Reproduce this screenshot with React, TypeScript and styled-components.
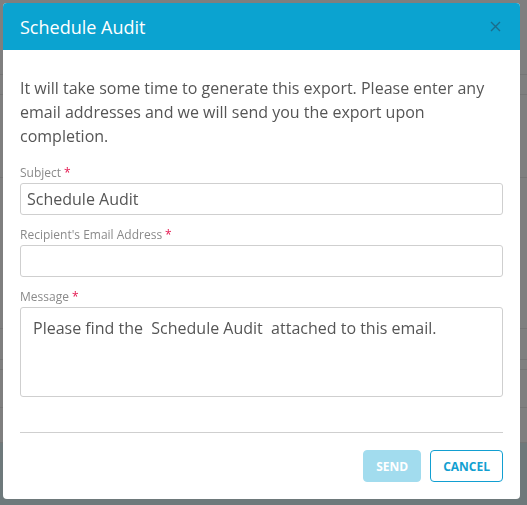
import React from "react";
import styled, { createGlobalStyle } from "styled-components";

const GlobalStyle = createGlobalStyle`
  html, body {
    margin: 0;
    padding: 0;
    height: 100%;
  }
  body {
    font-family: "Open Sans", "Liberation Sans", Arial, sans-serif;
    background: #ffffff;
    overflow: hidden;
  }
`;

// rows of the page that sits behind the dialog
const pageRows = [75, 20, 83, 151, 31, 10, 38, 35];

const Page = styled.div`
  display: flex;
  flex-direction: column;
  height: 505px;
`;

const PageRow = styled.div<{ $h: number }>`
  height: ${(p) => p.$h}px;
  border-bottom: 1px solid #ebebeb;
  box-sizing: border-box;
`;

const PageFooter = styled.div`
  flex: 1;
  background: #dcf2f6;
`;

const Overlay = styled.div`
  position: fixed;
  inset: 0;
  background: rgba(0, 0, 0, 0.5);
  padding: 3px 7px 6px 3px;
  box-sizing: border-box;
  display: flex;
`;

const Dialog = styled.div`
  flex: 1;
  background: #fff;
  border-radius: 4px;
  overflow: hidden;
  display: flex;
  flex-direction: column;
`;

const Header = styled.div`
  height: 47px;
  background: #0ba3d0;
  display: flex;
  align-items: center;
  justify-content: space-between;
  padding: 0 17px;
  flex-shrink: 0;
`;

const Title = styled.h4`
  margin: 0;
  color: #fff;
  font-size: 18px;
  font-weight: 400;
`;

const CloseButton = styled.button`
  border: 0;
  background: none;
  padding: 0;
  width: 16px;
  height: 16px;
  display: flex;
  align-items: center;
  justify-content: center;
  cursor: pointer;
`;

const Body = styled.div`
  padding: 26px 17px 0 17px;
  display: flex;
  flex-direction: column;
`;

const Intro = styled.p`
  margin: 0 0 17px;
  font-size: 16px;
  line-height: 24px;
  color: #555;
`;

const Field = styled.div<{ $last?: boolean }>`
  display: flex;
  flex-direction: column;
  margin-bottom: ${(p) => (p.$last ? 0 : 12)}px;
`;

const Label = styled.label`
  font-size: 12px;
  line-height: 16px;
  color: #8a8a8a;
  margin-bottom: 2px;
`;

const Required = styled.span`
  color: #e4174f;
  margin-left: 3px;
`;

const TextInput = styled.input`
  height: 32px;
  box-sizing: border-box;
  border: 1px solid #cfcfcf;
  border-radius: 3px;
  padding: 0 6px;
  font-family: inherit;
  font-size: 16px;
  color: #555;
  outline: none;
`;

const TextArea = styled.textarea`
  height: 90px;
  box-sizing: border-box;
  border: 1px solid #cfcfcf;
  border-radius: 3px;
  padding: 8px 12px;
  font-family: inherit;
  font-size: 16px;
  line-height: 24px;
  color: #555;
  resize: none;
  outline: none;
`;

const Divider = styled.hr`
  border: 0;
  border-top: 1px solid #cfcfcf;
  margin: 35px 0 17px;
`;

const Actions = styled.div`
  display: flex;
  justify-content: flex-end;
  gap: 9px;
`;

const Button = styled.button<{ $variant: "primary" | "outline" }>`
  height: 32px;
  box-sizing: border-box;
  border-radius: 4px;
  font-family: inherit;
  font-size: 12px;
  font-weight: 700;
  padding: 0 12px;
  cursor: pointer;
  border: 1px solid ${(p) => (p.$variant === "primary" ? "#a2dcee" : "#129fd1")};
  background: ${(p) => (p.$variant === "primary" ? "#a2dcee" : "#fff")};
  color: ${(p) => (p.$variant === "primary" ? "#fff" : "#129fd1")};
  &:disabled {
    cursor: default;
  }
`;

const App = () => {
  const [subject, setSubject] = React.useState("Schedule Audit");
  const [recipients, setRecipients] = React.useState("");
  const [message, setMessage] = React.useState(
    "Please find the  Schedule Audit  attached to this email."
  );

  const canSend = recipients.trim().length > 0;

  return (
    <>
      <GlobalStyle />
      <Page>
        {pageRows.map((h, i) => (
          <PageRow key={i} $h={h} />
        ))}
        <PageFooter />
      </Page>
      <Overlay>
        <Dialog>
          <Header>
            <Title>Schedule Audit</Title>
            <CloseButton aria-label="Close">
              <svg width="11" height="11" viewBox="0 0 11 11">
                <path
                  d="M1 1L10 10M10 1L1 10"
                  stroke="#1b6d8c"
                  strokeWidth="1.4"
                  fill="none"
                />
              </svg>
            </CloseButton>
          </Header>
          <Body>
            <Intro>
              It will take some time to generate this export. Please enter any
              email addresses and we will send you the export upon completion.
            </Intro>
            <Field>
              <Label>
                Subject<Required>*</Required>
              </Label>
              <TextInput
                value={subject}
                onChange={(e) => setSubject(e.target.value)}
              />
            </Field>
            <Field>
              <Label>
                Recipient's Email Address<Required>*</Required>
              </Label>
              <TextInput
                value={recipients}
                onChange={(e) => setRecipients(e.target.value)}
              />
            </Field>
            <Field $last>
              <Label>
                Message<Required>*</Required>
              </Label>
              <TextArea
                value={message}
                onChange={(e) => setMessage(e.target.value)}
              />
            </Field>
            <Divider />
            <Actions>
              <Button $variant="primary" disabled={!canSend}>
                SEND
              </Button>
              <Button $variant="outline">CANCEL</Button>
            </Actions>
          </Body>
        </Dialog>
      </Overlay>
    </>
  );
};

export default App;
